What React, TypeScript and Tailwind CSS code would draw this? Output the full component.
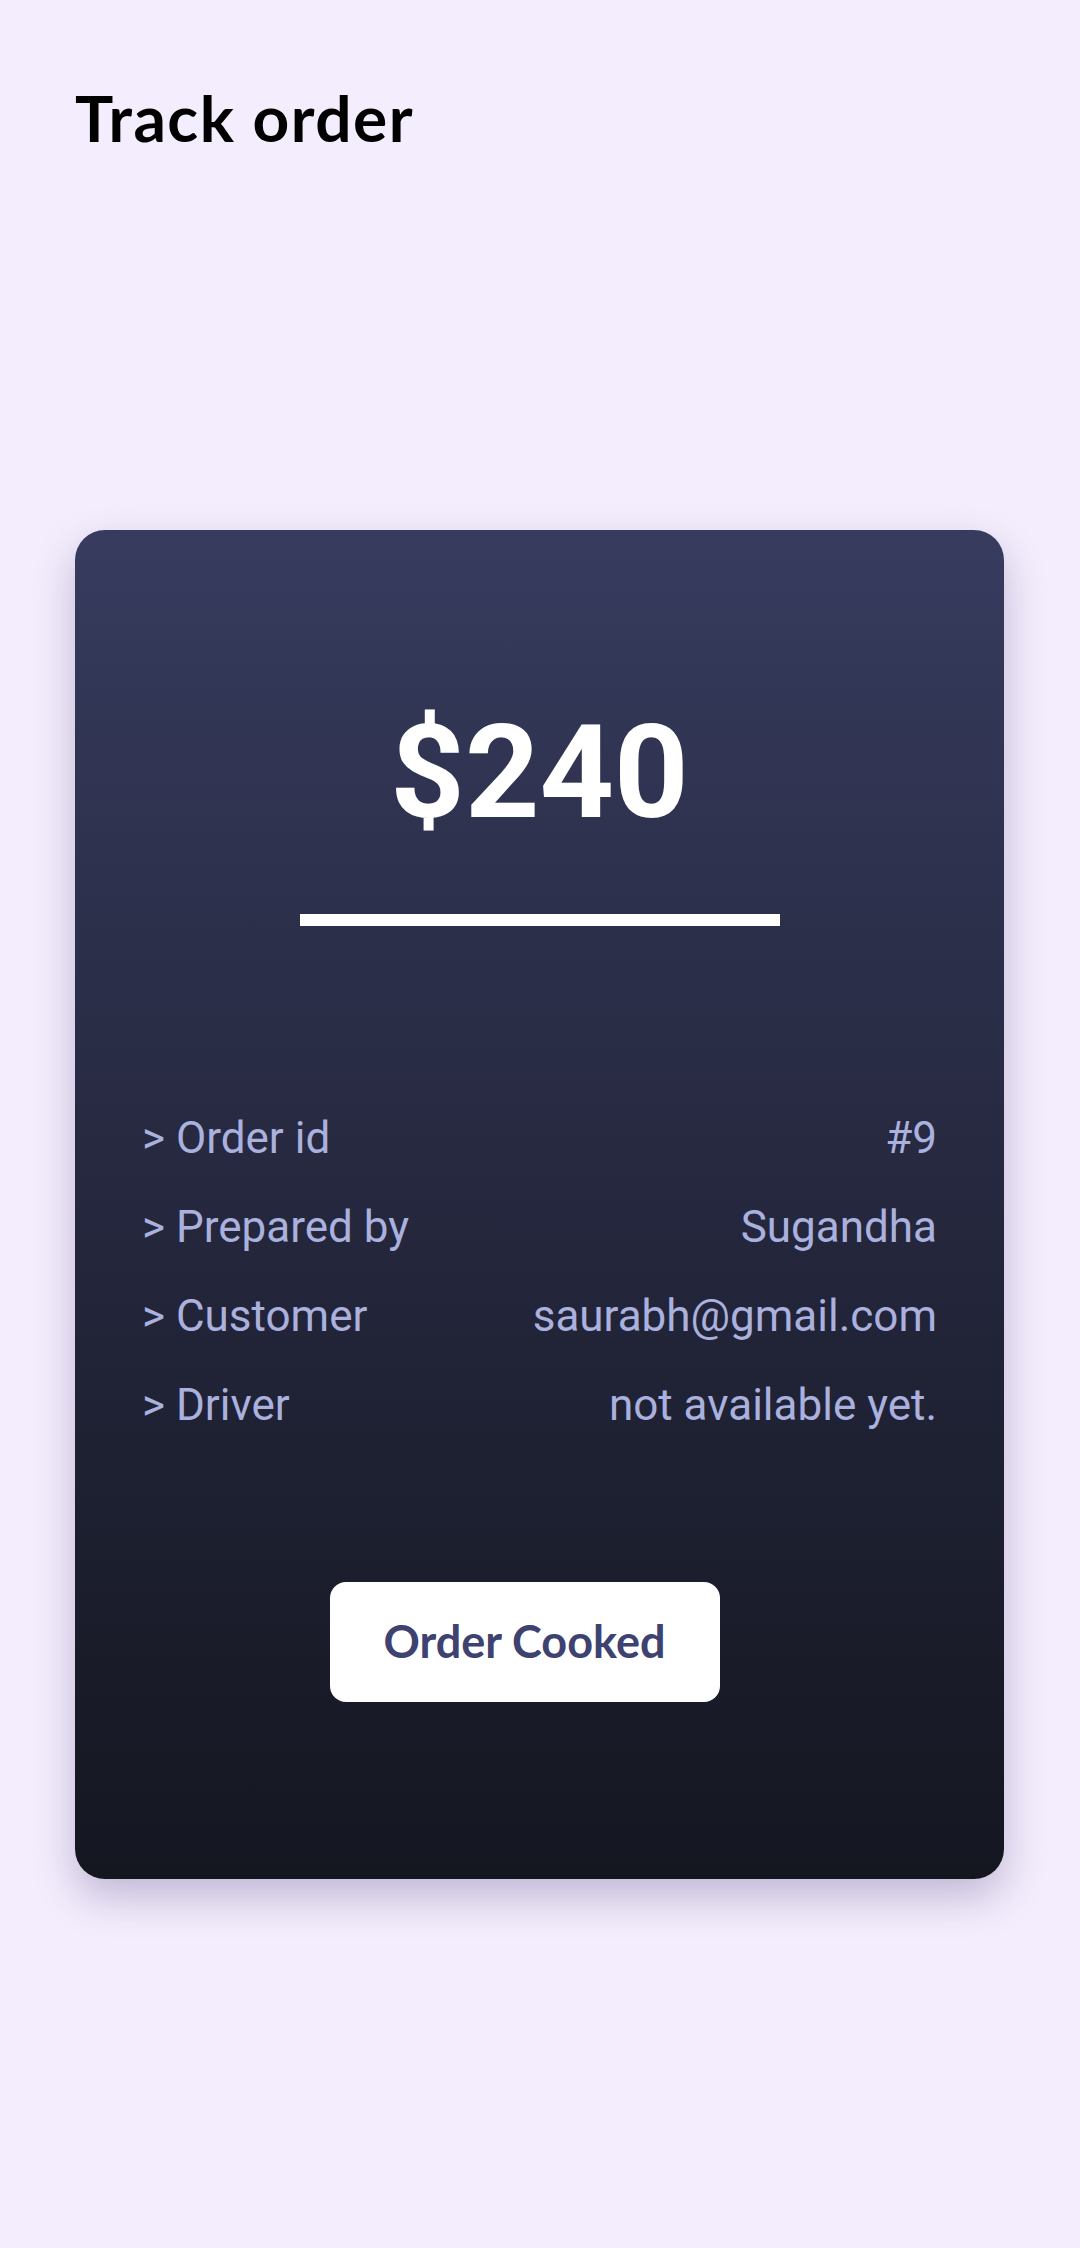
const rows = [
  { label: "Order id", value: "#9" },
  { label: "Prepared by", value: "Sugandha" },
  { label: "Customer", value: "saurabh@gmail.com" },
  { label: "Driver", value: "not available yet." },
];

export default function App() {
  return (
    <div className="min-h-screen w-full bg-[#f3edfd] px-[75px] pt-[80px] font-['Roboto',sans-serif]">
      <h1 className="font-['Lato',sans-serif] text-[64px] font-bold leading-[76px] tracking-[1.5px] text-black">
        Track order
      </h1>

      <div className="mt-[374px] w-[929px] rounded-[30px] bg-gradient-to-b from-[#373b5e] to-[#141620] px-[67px] pt-[178px] pb-[177px] shadow-[0_18px_40px_rgba(70,50,110,0.28)]">
        <div className="flex flex-col items-center">
          <div className="text-[130px] font-bold leading-none text-white">$240</div>
          <div className="mt-[76px] h-[12px] w-[480px] bg-white" />
        </div>

        <div className="mt-[168px] flex flex-col">
          {rows.map((row) => (
            <div
              key={row.label}
              className="flex items-center justify-between text-[44px] leading-[89px] text-[#aab1de]"
            >
              <span>&gt; {row.label}</span>
              <span>{row.value}</span>
            </div>
          ))}
        </div>

        <div className="mt-[132px] flex justify-center pr-[30px]">
          <button className="h-[120px] w-[390px] rounded-[16px] bg-white font-['Lato',sans-serif] text-[45px] font-bold text-[#3d4270]">
            Order Cooked
          </button>
        </div>
      </div>
    </div>
  );
}
